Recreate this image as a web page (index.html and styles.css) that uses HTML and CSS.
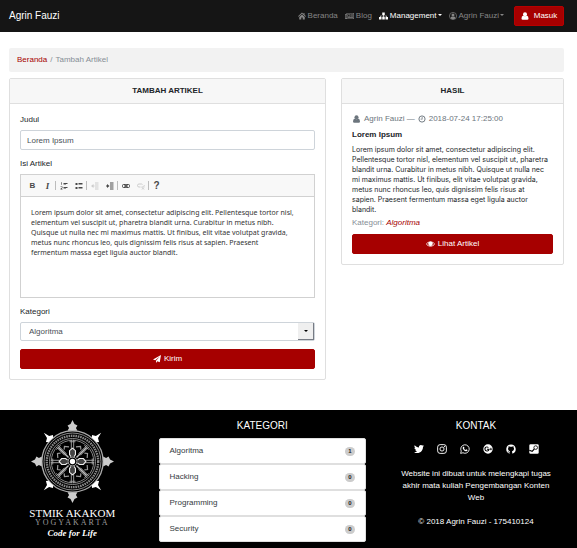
FILE: index.html
```html
<!DOCTYPE html>
<html lang="id">
<head>
<meta charset="utf-8">
<meta name="viewport" content="width=device-width, initial-scale=1">
<title>Tambah Artikel</title>
<link rel="stylesheet" href="styles.css">
</head>
<body>
<svg class="sprite" aria-hidden="true">
  <symbol id="home" viewBox="0 0 16 16"><path d="M8 1 0 8.500l1.200 1.200L8 3.500l6.800 6.200L16 8.500l-3-2.800V2h-2v1.800z"/><path d="M8 4.800 2.500 9.800V15H6.500v-4h3v4h4V9.800z"/></symbol>
  <symbol id="news" viewBox="0 0 18 16"><path fill-rule="evenodd" d="M3 2h15v12H1.500Q0 14 0 12.500V4h3zM4.200 3.200v9.600h12.600V3.200zM1.200 5.200v7l1.800.300V5.200zM5 4.500h5.500v5H5zM6.200 5.700v2.600h3V5.700zM11.500 4.500h4.500v1.200h-4.500zM11.500 6.500h4.500v1.200h-4.500zM11.500 8.500h4.500v1.200h-4.500zM5 10.700h11v1.200H5z"/></symbol>
  <symbol id="sitemap" viewBox="0 0 18 16"><path d="M6.500 1h5v5H9.700v1.500h6V10H18v5h-5v-5h1.500V8.700H9.700V10h1.800v5h-5v-5h1.800V8.700H3.500V10H5v5H0v-5h2.300V7.500h6V6H6.500z"/></symbol>
  <symbol id="user-circle" viewBox="0 0 16 16"><circle cx="8" cy="8" r="7.200" fill="none" stroke="currentColor" stroke-width="1.300"/><circle cx="8" cy="6.200" r="3"/><path d="M3 12.500q.5-3.700 3-3.700 2 1.200 4 0 2.500 0 3 3.700-2 2-5 2t-5-2z"/></symbol>
  <symbol id="user" viewBox="0 0 16 16"><circle cx="8" cy="4.500" r="4"/><path d="M4.500 7q3.500 3 7 0 3.500.5 3.500 6 0 2.500-2.500 2.500h-9Q1 15.500 1 13q0-5.500 3.500-6z"/></symbol>
  <symbol id="clock" viewBox="0 0 16 16"><circle cx="8" cy="8" r="6.200" fill="none" stroke="currentColor" stroke-width="1.900"/><path d="M7.500 4h1.500v5H5.200V7.600h2.300z"/></symbol>
  <symbol id="eye" viewBox="0 0 18 16"><path fill-rule="evenodd" d="M0 8q3.500-5.500 9-5.500T18 8q-3.500 5.500-9 5.500T0 8zm1.500 0Q4.500 12.300 9 12.300T16.500 8q-1.500-2.300-4-3.500a4.500 4.500 0 1 1-7 0Q3 5.700 1.500 8z"/><path d="M9 4.500a3.500 3.500 0 1 1-3.500 3.500H7Q7 6 9 6z"/></symbol>
  <symbol id="plane" viewBox="0 0 16 16"><path d="M16 0 13.500 14.500 8.500 12.300 6 16v-4.700L13.500 3 4.500 10.700 0 9z"/></symbol>
  <symbol id="twitter" viewBox="0 0 24 24"><path d="M23.950 4.570a10 10 0 0 1-2.820.770 4.960 4.960 0 0 0 2.160-2.720c-.950.550-2 .950-3.130 1.180a4.920 4.920 0 0 0-8.380 4.480C7.690 8.090 4.070 6.130 1.640 3.160a4.820 4.820 0 0 0-.670 2.480c0 1.710.870 3.210 2.190 4.100a4.900 4.900 0 0 1-2.230-.620v.060a4.920 4.920 0 0 0 3.950 4.830 5 5 0 0 1-2.210.080 4.940 4.940 0 0 0 4.600 3.420A9.870 9.870 0 0 1 0 19.540a13.990 13.990 0 0 0 7.550 2.210c9.050 0 14-7.500 14-13.980v-.640a9.940 9.940 0 0 0 2.400-2.560z"/></symbol>
  <symbol id="instagram" viewBox="0 0 16 16"><g fill="none" stroke="currentColor" stroke-width="1.500"><rect x="1" y="1" width="14" height="14" rx="4"/><circle cx="8" cy="8" r="3.300"/></g><circle cx="12" cy="4" r="1"/></symbol>
  <symbol id="whatsapp" viewBox="0 0 16 16"><path d="M1 15l1-3.700A6.800 6.800 0 1 1 4.700 14z" fill="none" stroke="currentColor" stroke-width="1.400"/><path d="M5 4.200h1.300l.9 2-.8 1q.9 1.700 2.600 2.400l1-1.100 2 1q0 2-2 2.200Q8 12 5.500 9 3 6 5 4.200z"/></symbol>
  <symbol id="google" viewBox="0 0 16 16"><path fill-rule="evenodd" d="M8 .5a7.500 7.500 0 1 1 0 15 7.500 7.500 0 0 1 0-15zM6.300 4a4 4 0 1 0 3.900 3.500H6.300V9h2.200A2.400 2.400 0 1 1 8 6.200l1.100-1.100A4 4 0 0 0 6.300 4zM12 6v1.400h-1.300v1.200H12V10h1.200V8.600h1.300V7.400h-1.300V6z"/></symbol>
  <symbol id="github" viewBox="0 0 16 16"><path d="M8 .7a7.500 7.500 0 0 0-2.400 14.600c.4.100.5-.2.500-.4v-1.400C4 14 3.600 12.600 3.600 12.600c-.3-.9-.8-1.100-.8-1.100-.7-.5 0-.5 0-.5.800.1 1.200.8 1.200.8.700 1.200 1.800.8 2.200.6l.5-1c-1.700-.2-3.400-.8-3.400-3.700 0-.8.300-1.500.8-2-.1-.2-.4-1 .1-2 0 0 .6-.2 2 .8a7 7 0 0 1 3.700 0c1.400-1 2-.8 2-.8.500 1 .2 1.800.1 2 .5.500.8 1.200.8 2 0 2.900-1.700 3.500-3.400 3.700.3.300.5.700.5 1.400v2.100c0 .2.100.500.500.4A7.500 7.500 0 0 0 8 .7z"/></symbol>
  <symbol id="steam" viewBox="0 0 16 16"><rect x=".5" y=".5" width="15" height="15" rx="2"/><path d="M.5 10 5 11.800 8.500 8" fill="none" stroke="#000" stroke-width="1.800"/><circle cx="10.700" cy="5.700" r="2.900" fill="none" stroke="#000" stroke-width="1.300"/></symbol>
  <symbol id="ol" viewBox="0 0 16 16"><path d="M2 1h2v5H3V2.500H2zM1 9h4v3L3 14h2v1H1v-1.500L4 11v-1H1zM7 2h8v2H7zM7 5h5v1H7zM7 10h8v2H7zM7 13h5v1H7z"/></symbol>
  <symbol id="ul" viewBox="0 0 16 16"><path d="M1 2h4v4H1zM1 10h4v4H1zM7 2h8v3H7zM7 10h8v3H7z"/></symbol>
  <symbol id="outdent" viewBox="0 0 16 16"><path d="M5 7V4L0 8l5 4V9h2V7zM8 1h7v2H8zM8 5h7v2H8zM8 9h7v2H8zM8 13h7v2H8z"/></symbol>
  <symbol id="indent" viewBox="0 0 16 16"><path d="M2 7V4l5 4-5 4V9H0V7zM8 1h7v2H8zM8 5h7v2H8zM8 9h7v2H8zM8 13h7v2H8z"/></symbol>
  <symbol id="link" viewBox="0 0 16 16"><g fill="none" stroke="currentColor" stroke-width="2"><rect x="1" y="5" width="8" height="6" rx="2"/><rect x="7" y="5" width="8" height="6" rx="2"/><path d="M4 8h8"/></g></symbol>
  <symbol id="unlink" viewBox="0 0 16 16"><g fill="none" stroke="currentColor" stroke-width="2"><path d="M7 10H4a2.500 2.500 0 0 1 0-6h5a2.500 2.500 0 0 1 2 1M9 10h3a2.500 2.500 0 0 0 2-4M10 11l4 4M14 11l-4 4"/></g></symbol>
</svg>

<header class="navbar">
  <a class="brand" href="#">Agrin Fauzi</a>
  <nav class="menu">
    <a href="#"><svg class="icon"><use href="#home"/></svg>Beranda</a>
    <a href="#"><svg class="icon wide"><use href="#news"/></svg>Blog</a>
    <a class="active" href="#"><svg class="icon wide"><use href="#sitemap"/></svg>Management<i class="caret"></i></a>
    <a href="#"><svg class="icon"><use href="#user-circle"/></svg>Agrin Fauzi<i class="caret"></i></a>
    <button class="btn login" type="button"><svg class="icon"><use href="#user"/></svg>Masuk</button>
  </nav>
</header>

<main class="page">
  <nav class="breadcrumb"><a href="#">Beranda</a><span>/</span><span>Tambah Artikel</span></nav>
  <div class="columns">
    <section class="card">
      <h2 class="card-title">TAMBAH ARTIKEL</h2>
      <form class="card-body form">
        <div class="field">
          <label for="judul">Judul</label>
          <input class="control" id="judul" type="text" value="Lorem Ipsum">
        </div>
        <div class="field">
          <label for="isi">Isi Artikel</label>
          <div class="editor">
            <div class="toolbar">
              <div class="tools"><button type="button" class="bold">B</button><button type="button" class="italic">I</button></div>
              <div class="tools"><button type="button" aria-label="Daftar bernomor"><svg class="icon"><use href="#ol"/></svg></button><button type="button" aria-label="Daftar"><svg class="icon"><use href="#ul"/></svg></button></div>
              <div class="tools"><button type="button" disabled aria-label="Kurangi indentasi"><svg class="icon"><use href="#outdent"/></svg></button><button type="button" aria-label="Tambah indentasi"><svg class="icon"><use href="#indent"/></svg></button></div>
              <div class="tools"><button type="button" aria-label="Tautan"><svg class="icon"><use href="#link"/></svg></button><button type="button" disabled aria-label="Hapus tautan"><svg class="icon"><use href="#unlink"/></svg></button></div>
              <div class="tools"><button type="button" class="bold help">?</button></div>
            </div>
            <textarea id="isi">Lorem ipsum dolor sit amet, consectetur adipiscing elit. Pellentesque tortor nisl, elementum vel suscipit ut, pharetra blandit urna. Curabitur in metus nibh. Quisque ut nulla nec mi maximus mattis. Ut finibus, elit vitae volutpat gravida, metus nunc rhoncus leo, quis dignissim felis risus at sapien. Praesent fermentum massa eget ligula auctor blandit.</textarea>
          </div>
        </div>
        <div class="field">
          <label for="kategori">Kategori</label>
          <div class="select">
            <select class="control" id="kategori"><option>Algoritma</option><option>Hacking</option><option>Programming</option><option>Security</option></select>
            <span class="select-arrow"><i class="caret"></i></span>
          </div>
        </div>
        <button class="btn" type="button"><svg class="icon"><use href="#plane"/></svg>Kirim</button>
      </form>
    </section>

    <section class="card">
      <h2 class="card-title">HASIL</h2>
      <article class="card-body result">
        <p class="meta"><svg class="icon wide"><use href="#user"/></svg><span>Agrin Fauzi —</span><svg class="icon"><use href="#clock"/></svg><span>2018-07-24 17:25:00</span></p>
        <h3>Lorem Ipsum</h3>
        <p class="text">Lorem ipsum dolor sit amet, consectetur adipiscing elit. Pellentesque tortor nisl, elementum vel suscipit ut, pharetra blandit urna. Curabitur in metus nibh. Quisque ut nulla nec mi maximus mattis. Ut finibus, elit vitae volutpat gravida, metus nunc rhoncus leo, quis dignissim felis risus at sapien. Praesent fermentum massa eget ligula auctor blandit.</p>
        <p class="category">Kategori: <a href="#">Algoritma</a></p>
        <button class="btn" type="button"><svg class="icon wide"><use href="#eye"/></svg>Lihat Artikel</button>
      </article>
    </section>
  </div>
</main>

<footer class="footer">
  <div class="logo">
    <svg class="emblem" viewBox="-42 -42 84 84" aria-hidden="true">
      <defs>
        <g id="spoke"><path d="M-1.200-10V-22M1.200-10V-22M-3-20h6" stroke="#aaa" stroke-width=".9"/></g>
        <path id="petal" d="M-1.500-5-3-7V-11L0-13.500 3-11V-7L1.500-5" fill="#444" stroke="#eee" stroke-width="1.100"/>
        <path id="curl" d="M-8-13-5-16.500-2.500-14.500M8-13 5-16.500 2.500-14.500" fill="none" stroke="#999" stroke-width="1.200"/>
        <path id="tip" d="M0-42 2-38 5-36.500 3.500-34 5-31H-5L-3.500-34-5-36.500-2-38z" fill="#ccc"/>
        <path id="arrow" d="M0-41 1.500-35 5-33 3.500-31H-3.500L-5-33-1.500-35z" fill="#fff"/>
      </defs>
      <g fill="none" stroke="#aaa">
        <circle r="31" stroke-width="1.300"/>
        <circle r="28.800" stroke="#888" stroke-width="1"/>
        <circle r="26" stroke="#888" stroke-width="2.400" stroke-dasharray="1.600 .8"/>
        <circle r="23.300" stroke="#888" stroke-width="1"/>
        <circle r="21.500" stroke="#888" stroke-width="1"/>
      </g>
      <use href="#spoke"/><use href="#spoke" transform="rotate(45)"/><use href="#spoke" transform="rotate(90)"/><use href="#spoke" transform="rotate(135)"/><use href="#spoke" transform="rotate(180)"/><use href="#spoke" transform="rotate(225)"/><use href="#spoke" transform="rotate(270)"/><use href="#spoke" transform="rotate(315)"/>
      <use href="#curl" transform="rotate(45)"/><use href="#curl" transform="rotate(135)"/><use href="#curl" transform="rotate(225)"/><use href="#curl" transform="rotate(315)"/>
      <path d="M-14-14-4-4M14-14 4-4M-14 14-4 4M14 14 4 4" stroke="#bbb" stroke-width="1.500"/>
      <use href="#petal"/><use href="#petal" transform="rotate(90)"/><use href="#petal" transform="rotate(180)"/><use href="#petal" transform="rotate(270)"/>
      <use href="#tip"/><use href="#tip" transform="rotate(90)"/><use href="#tip" transform="rotate(180)"/><use href="#tip" transform="rotate(270)"/>
      <use href="#arrow" transform="rotate(45)"/><use href="#arrow" transform="rotate(135)"/><use href="#arrow" transform="rotate(225)"/><use href="#arrow" transform="rotate(315)"/>
      <circle r="4.500" fill="#000" stroke="#bbb"/>
      <circle r="2.700" fill="#fff"/>
    </svg>
    <span class="logo-name">STMIK AKAKOM</span>
    <span class="logo-city">YOGYAKARTA</span>
    <span class="logo-motto">Code for Life</span>
  </div>
  <section class="categories">
    <h2>KATEGORI</h2>
    <ul>
      <li><a href="#">Algoritma</a><span class="badge">1</span></li>
      <li><a href="#">Hacking</a><span class="badge">0</span></li>
      <li><a href="#">Programming</a><span class="badge">0</span></li>
      <li><a href="#">Security</a><span class="badge">0</span></li>
    </ul>
  </section>
  <section class="contact">
    <h2>KONTAK</h2>
    <div class="social">
      <a href="#" aria-label="Twitter"><svg><use href="#twitter"/></svg></a>
      <a href="#" aria-label="Instagram"><svg><use href="#instagram"/></svg></a>
      <a href="#" aria-label="WhatsApp"><svg><use href="#whatsapp"/></svg></a>
      <a href="#" aria-label="Google Plus"><svg><use href="#google"/></svg></a>
      <a href="#" aria-label="GitHub"><svg><use href="#github"/></svg></a>
      <a href="#" aria-label="Steam"><svg><use href="#steam"/></svg></a>
    </div>
    <p>Website ini dibuat untuk melengkapi tugas akhir mata kuliah Pengembangan Konten Web</p>
    <p>© 2018 Agrin Fauzi - 175410124</p>
  </section>
</footer>
</body>
</html>
```
FILE: styles.css
```css
* { box-sizing: border-box; }

body {
  margin: 0;
  min-height: 100vh;
  display: flex;
  flex-direction: column;
  background: #fff;
  color: #212529;
  font: 8px/12px "Liberation Sans", Arial, sans-serif;
}

h2, h3, p, ul { margin: 0; padding: 0; }
a { color: #a60000; text-decoration: none; }
button, input, select, textarea { font: inherit; margin: 0; }

.sprite { position: absolute; width: 0; height: 0; }
.icon { width: 8px; height: 8px; fill: currentColor; flex: none; }
.icon.wide { width: 9px; }

.caret {
  border: 2px solid transparent;
  border-top-color: currentColor;
  border-bottom: 0;
}

.btn {
  display: flex;
  align-items: center;
  justify-content: center;
  gap: 3px;
  width: 100%;
  height: 20px;
  padding: 0 8px;
  border: 1px solid #a60000;
  border-radius: 2px;
  background: #a60000;
  color: #fff;
}

.navbar {
  display: flex;
  align-items: center;
  justify-content: space-between;
  height: 32px;
  padding: 0 13px 0 9px;
  background: #151515;
}
.brand { color: #fff; font-size: 10px; }
.menu { display: flex; align-items: center; gap: 7px; }
.menu a { display: flex; align-items: center; gap: 2px; color: #868686; }
.menu a.active { color: #fff; }
.menu .caret { margin: 0 0 2px -1px; }
.btn.login { width: 50px; gap: 5px; margin-left: 3px; border-color: #b80000; }

.page { flex: 1; padding: 16px 13px 30px 9px; }

.breadcrumb {
  display: flex;
  gap: 3px;
  padding: 6px 8px;
  margin-bottom: 6px;
  border-radius: 2px;
  background: #f2f2f2;
  color: #868e96;
}

.columns {
  display: grid;
  grid-template-columns: 317fr 223fr;
  gap: 15px;
  align-items: start;
}

.card { min-width: 0; border: 1px solid #dfdfdf; border-radius: 2px; }
.card-title {
  padding: 6px;
  border-bottom: 1px solid #dfdfdf;
  background: #f7f7f7;
  font-size: 8px;
  line-height: 12px;
  text-align: center;
}
.card-body { padding: 10px; }

.form { display: grid; gap: 8px; }
.field { display: grid; gap: 4px; }

.control {
  display: block;
  width: 100%;
  height: 20px;
  padding: 0 6px;
  border: 1px solid #ced4da;
  border-radius: 2px;
  background: #fff;
  color: #495057;
}

.editor { border: 1px solid #d1d1d1; }
.toolbar {
  display: flex;
  align-items: center;
  height: 22px;
  padding: 0 4px;
  border-bottom: 1px solid #d1d1d1;
  background: #f8f8f8;
}
.tools { display: flex; }
.tools + .tools { border-left: 1px solid #bcbcbc; }
.tools button {
  display: flex;
  align-items: center;
  justify-content: center;
  width: 15px;
  height: 9px;
  padding: 0;
  border: 0;
  background: none;
  color: #484848;
}
.tools button:disabled { color: #ccc; }
.tools .bold { font-weight: bold; }
.tools .help { font-size: 10px; }
.tools .italic { font: italic bold 9px "Liberation Serif", serif; }

textarea {
  display: block;
  width: 100%;
  height: 100px;
  padding: 11px 18px 10px 10px;
  border: 0;
  resize: none;
  background: #fff;
  color: #333;
  font: 7px/10px "Noto Sans", "DejaVu Sans", sans-serif;
}

.select { position: relative; }
.select .control { height: 19px; padding: 0 8px; appearance: none; }
.select-arrow {
  position: absolute;
  top: 1px;
  right: 1px;
  bottom: 1px;
  width: 16px;
  display: flex;
  align-items: center;
  justify-content: center;
  border-right: 1px solid #777b84;
  border-bottom: 1px solid #777b84;
  background: #efefef;
  color: #000;
  pointer-events: none;
}

.meta { display: flex; align-items: center; gap: 3px; color: #6c757d; }
.result { padding-top: 9px; }
.result h3 { margin: 4px 0; font-size: 8px; line-height: 12px; }
.text { margin-right: 4px; font-family: Inter, "Liberation Sans", sans-serif; font-size: 7px; line-height: 10px; }
.category { margin: 2px 0 5px; color: #868e96; }
.category a { font-style: italic; }

.footer {
  display: grid;
  grid-template-columns: 3fr 5fr 4fr;
  padding: 10px 6px 6px 1px;
  background: #000;
  color: #fff;
}
.footer h2 { font-size: 10px; line-height: 12px; font-weight: normal; text-align: center; }

.logo { display: flex; flex-direction: column; align-items: center; white-space: nowrap; }
.emblem { width: 83px; height: 83px; }
.logo-name { margin-top: 4px; font: 11px/12px "Liberation Serif", serif; }
.logo-city { color: #999; font: 8px/8px "Liberation Serif", serif; letter-spacing: 2px; }
.logo-motto { font: italic bold 9px/12px "Liberation Serif", serif; }

.categories { padding: 0 15px; }
.categories h2 { margin: 0 0 6px; }
.categories ul { list-style: none; }
.categories li {
  display: flex;
  align-items: center;
  justify-content: space-between;
  height: 26px;
  padding: 0 10px;
  border: 1px solid #dfdfdf;
  border-radius: 2px;
  background: #fff;
}
.categories a { color: #343a40; }
.badge {
  width: 10px;
  border-radius: 5px;
  background: #ccc;
  color: #222;
  font-size: 6px;
  line-height: 9px;
  font-weight: bold;
  text-align: center;
}

.contact { text-align: center; padding: 0 20px; }
.social { display: flex; justify-content: center; gap: 13px; margin: 12px 0 14px; }
.social a { display: flex; color: #fff; }
.social svg { width: 10px; height: 10px; fill: currentColor; }
.contact p + p { margin-top: 12px; }
```
